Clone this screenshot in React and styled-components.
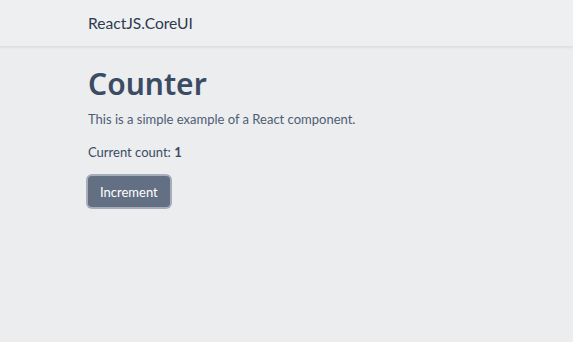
import React, { useState } from "react";
import styled, { createGlobalStyle } from "styled-components";

const Global = createGlobalStyle`
  html, body { margin: 0; padding: 0; background: #ebedef; }
  body { font-family: "Lato", "Open Sans", sans-serif; color: #3c4b64; }
  #root { min-height: 342px; }
`;

const Header = styled.header`
  height: 47px;
  background: #eeeff1;
  border-bottom: 1px solid #dcdfe4;
  box-shadow: 0 1px 2px rgba(0, 0, 21, 0.06);
  display: flex;
  align-items: center;
  padding: 0 88px;
  box-sizing: border-box;
`;

const Brand = styled.div`
  font-size: 15.6px;
  line-height: 1;
  color: #2e3a4e;
  margin-top: 1px;
`;

const Main = styled.main`
  padding: 19px 88px 0;
`;

const Title = styled.h1`
  margin: 0;
  font-family: "Noto Sans", "Lato", sans-serif;
  font-size: 30px;
  font-weight: 600;
  line-height: 36px;
  color: #3c4b64;
`;

const Text = styled.p`
  margin: 8px 0 0;
  font-size: 13px;
  line-height: 19px;
  color: #4f5d73;
`;

const Count = styled.p`
  margin: 14px 0 0;
  font-size: 13px;
  line-height: 19px;
  color: #3c4b64;
`;

const Button = styled.button`
  display: block;
  margin-top: 14px;
  height: 31px;
  padding: 0 12px;
  font-family: inherit;
  font-size: 13px;
  color: #fff;
  background: #636f83;
  border: none;
  border-radius: 4px;
  box-shadow: 0 0 0 2px #a7aebb;
  cursor: pointer;
`;

export default function App() {
  const [count, setCount] = useState(1);
  return (
    <>
      <Global />
      <Header>
        <Brand>ReactJS.CoreUI</Brand>
      </Header>
      <Main>
        <Title>Counter</Title>
        <Text>This is a simple example of a React component.</Text>
        <Count>
          Current count: <strong>{count}</strong>
        </Count>
        <Button onClick={() => setCount(count + 1)}>Increment</Button>
      </Main>
    </>
  );
}
